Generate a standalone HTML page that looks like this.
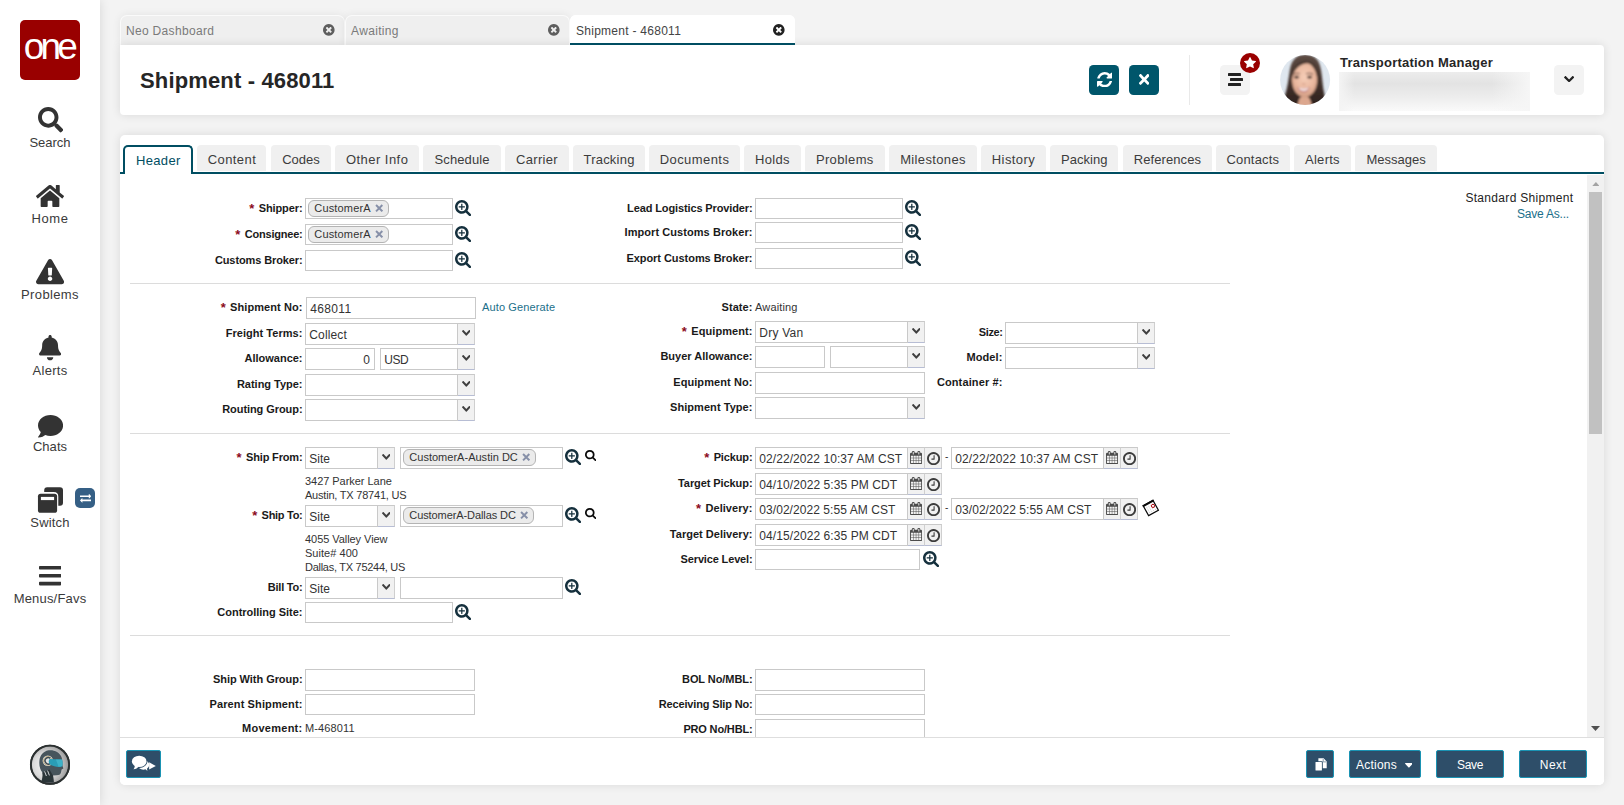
<!DOCTYPE html>
<html lang="en"><head><meta charset="utf-8"><title>Shipment - 468011</title><style>
html,body{margin:0;padding:0}
body{width:1624px;height:805px;overflow:hidden;position:relative;background:#f3f3f3;font-family:"Liberation Sans",sans-serif}
.a{position:absolute;box-sizing:content-box;display:block}
.t{position:absolute;line-height:20px;white-space:pre}
</style></head>
<body>
<div class="a" style="left:0px;top:0px;width:100px;height:805px;background:#fff;box-shadow:0 0 10px rgba(20,0,0,.12);"></div>
<div class="a" style="left:20px;top:20px;width:60px;height:60px;background:#990000;border-radius:5px;"></div>
<span class="t " style="top:37.18px;font-size:37px;letter-spacing:-3.912px;color:#fff;left:23.80px;">one</span>
<svg class="a" style="left:37.9px;top:107.35px" width="25.2" height="25.4" viewBox="0.0 0.0 512.0 512.1" preserveAspectRatio="none"><path d="M505 442.7L405.300 343c-4.500-4.500-10.600-7-17-7H372c27.600-35.300 44-79.700 44-128C416 93.100 322.900 0 208 0S0 93.100 0 208s93.100 208 208 208c48.300 0 92.700-16.400 128-44v16.300c0 6.400 2.500 12.500 7 17l99.700 99.700c9.400 9.400 24.600 9.400 33.900 0l28.300-28.300c9.400-9.400 9.400-24.600.1-34zM208 336c-70.700 0-128-57.200-128-128 0-70.700 57.200-128 128-128 70.700 0 128 57.200 128 128 0 70.700-57.200 128-128 128z" fill="#333"/></svg>
<span class="t " style="top:132.50px;font-size:13px;letter-spacing:-0.010px;color:#3a3a3a;left:29.43px;">Search</span>
<svg class="a" style="left:36px;top:184.9px" width="28" height="22" viewBox="-0.0 32.0 576.0 448.0" preserveAspectRatio="none"><path d="M280.370 148.260L96 300.110V464a16 16 0 0 0 16 16l112.060-.29a16 16 0 0 0 15.920-16V368a16 16 0 0 1 16-16h64a16 16 0 0 1 16 16v95.640a16 16 0 0 0 16 16.050L464 480a16 16 0 0 0 16-16V300L295.670 148.260a12.190 12.190 0 0 0-15.300 0zM571.600 251.470L488 182.560V44.050a12 12 0 0 0-12-12h-56a12 12 0 0 0-12 12v72.610L318.470 43a48 48 0 0 0-61 0L4.340 251.470a12 12 0 0 0-1.600 16.900l25.500 31A12 12 0 0 0 45.150 301l235.220-193.740a12.190 12.190 0 0 1 15.300 0L530.900 301a12 12 0 0 0 16.900-1.600l25.500-31a12 12 0 0 0-1.700-16.930z" fill="#333"/></svg>
<span class="t " style="top:208.50px;font-size:13px;letter-spacing:0.538px;color:#3a3a3a;left:31.59px;">Home</span>
<svg class="a" style="left:36px;top:259.35px" width="28.1" height="25.2" viewBox="-0.0 -0.0 576.0 512.0" preserveAspectRatio="none"><path d="M569.517 440.013C587.975 472.007 564.806 512 527.940 512H48.054c-36.937 0-59.999-40.055-41.577-71.987L246.423 23.985c18.467-32.009 64.720-31.951 83.154 0l239.940 416.028zM288 354c-25.405 0-46 20.595-46 46s20.595 46 46 46 46-20.595 46-46-20.595-46-46-46zm-43.673-165.346l7.418 136c.347 6.364 5.609 11.346 11.982 11.346h48.546c6.373 0 11.635-4.982 11.982-11.346l7.418-136c.375-6.874-5.098-12.654-11.982-12.654h-63.383c-6.884 0-12.356 5.780-11.981 12.654z" fill="#333"/></svg>
<span class="t " style="top:284.50px;font-size:13px;letter-spacing:0.365px;color:#3a3a3a;left:21.09px;">Problems</span>
<svg class="a" style="left:38.9px;top:335.45px" width="22.2" height="25.3" viewBox="-0.0 0.0 448.0 512.0" preserveAspectRatio="none"><path d="M224 512c35.320 0 63.970-28.650 63.970-64H160.030c0 35.350 28.650 64 63.970 64zm215.390-149.710c-19.320-20.760-55.470-51.990-55.470-154.290 0-77.700-54.480-139.900-127.940-155.160V32c0-17.670-14.320-32-31.980-32s-31.980 14.330-31.980 32v20.840C118.560 68.100 64.080 130.300 64.080 208c0 102.300-36.150 133.530-55.470 154.290-6 6.450-8.660 14.160-8.610 21.710.110 16.400 12.980 32 32.100 32h383.800c19.120 0 32-15.600 32.100-32 .050-7.550-2.610-15.270-8.610-21.710z" fill="#333"/></svg>
<span class="t " style="top:360.50px;font-size:13px;letter-spacing:0.279px;color:#3a3a3a;left:32.55px;">Alerts</span>
<svg class="a" style="left:37.9px;top:415.2px" width="25.1" height="22.6" viewBox="0.0 32.0 512.0 448.0" preserveAspectRatio="none"><path d="M256 32C114.600 32 0 125.100 0 240c0 49.600 21.400 95 57 130.700C44.500 421.100 2.700 466 2.200 466.500c-2.200 2.300-2.800 5.700-1.500 8.700S4.800 480 8 480c66.300 0 116-31.800 140.600-51.400 32.700 12.300 69 19.400 107.400 19.400 141.400 0 256-93.100 256-208S397.400 32 256 32z" fill="#333"/></svg>
<span class="t " style="top:436.50px;font-size:13px;letter-spacing:0.048px;color:#3a3a3a;left:32.90px;">Chats</span>
<svg class="a" style="left:37px;top:487px;" width="27" height="26" viewBox="37 487 27 26"><path d="M47.2 487.2 H60 Q63 487.2 63 490.2 V502.8 Q63 505.8 60 505.8 H58.3 V496.4 Q58.3 491.9 53.8 491.9 H44.2 V490.2 Q44.2 487.2 47.2 487.2Z" fill="#333"/><rect x="37.95" y="493.7" width="19.15" height="19.1" rx="2.6" fill="#333"/><rect x="40.9" y="496.9" width="13.2" height="3.2" fill="#fff"/></svg>
<div class="a" style="left:75px;top:488px;width:20px;height:20px;background:#355f85;border-radius:5px;"></div>
<svg class="a" style="left:79.9px;top:494.2px" width="11.2" height="8.7" viewBox="0.0 288.0 1792.0 1344.0" preserveAspectRatio="none"><path d="M1792 1184v192q0 13-9.500 22.500t-22.500 9.500h-1376v192q0 13-9.500 22.500t-22.500 9.500q-12 0-24-10l-319-320q-9-9-9-22 0-14 9-23l320-320q9-9 23-9 13 0 22.500 9.500t9.500 22.500v192h1376q13 0 22.500 9.500t9.500 22.500zm0-544q0 14-9 23l-320 320q-9 9-23 9-13 0-22.500-9.500t-9.500-22.500v-192h-1376q-13 0-22.500-9.500t-9.500-22.500v-192q0-13 9.500-22.500t22.500-9.500h1376v-192q0-14 9-23t23-9q12 0 24 10l319 319q9 9 9 23z" fill="#fff"/></svg>
<span class="t " style="top:512.50px;font-size:13px;letter-spacing:0.167px;color:#3a3a3a;left:30.35px;">Switch</span>
<svg class="a" style="left:38.9px;top:566.3px" width="22.2" height="19.4" viewBox="0.0 60.0 448.0 392.0" preserveAspectRatio="none"><path d="M16 132h416c8.837 0 16-7.163 16-16V76c0-8.837-7.163-16-16-16H16C7.163 60 0 67.163 0 76v40c0 8.837 7.163 16 16 16zm0 160h416c8.837 0 16-7.163 16-16v-40c0-8.837-7.163-16-16-16H16c-8.837 0-16 7.163-16 16v40c0 8.837 7.163 16 16 16zm0 160h416c8.837 0 16-7.163 16-16v-40c0-8.837-7.163-16-16-16H16c-8.837 0-16 7.163-16 16v40c0 8.837 7.163 16 16 16z" fill="#333"/></svg>
<span class="t " style="top:588.50px;font-size:13px;letter-spacing:0.184px;color:#3a3a3a;left:13.68px;">Menus/Favs</span>
<svg class="a" style="left:20px;top:735px" width="60" height="60" viewBox="0 0 60 60">
<defs><radialGradient id="rg" cx="38%" cy="52%" r="62%"><stop offset="0" stop-color="#f8f8f8"/><stop offset=".55" stop-color="#dadada"/><stop offset="1" stop-color="#9a9a9a"/></radialGradient>
<filter id="rb"><feGaussianBlur stdDeviation=".45"/></filter></defs>
<circle cx="30" cy="29.7" r="20" fill="#2b3030"/><circle cx="30" cy="29.7" r="18.1" fill="url(#rg)"/>
<g filter="url(#rb)">
<path d="M28.5 15.3 C34 14.6 39.5 17 41.5 22 C42.6 25 42.2 28 42.4 30.5 L43.4 33.6 L41.6 34.4 L41 37.4 C40.6 39.6 38.8 40 36.6 40.2 L33 40.6 L33.8 47.6 L21 47.6 C22.4 44 23.2 41 22.4 37.6 C20 34.6 19 31 19.4 26 C19.8 20.6 23 16.4 28.5 15.3 Z" fill="#46545c"/>
<path d="M22.4 37.6 L29.4 34.6 L33 40.6 L33.8 47.6 L21 47.6 C22.4 44 23.2 41 22.4 37.6Z" fill="#2c3439"/>
<path d="M24.6 36.4 L26.4 41 M27.6 35.6 L29.4 40.4" stroke="#cfd5d8" stroke-width="1"/>
<circle cx="27.8" cy="25.8" r="5.2" fill="#dfe3e4"/><circle cx="27.8" cy="25.8" r="4.4" fill="none" stroke="#b59a5c" stroke-width=".7"/>
<path d="M30.4 23.4 A3.2 3.2 0 1 0 30.4 28.2" fill="none" stroke="#3d494f" stroke-width="1.5"/>
<path d="M29.6 24 L42 24.4 C42.8 27 42.8 29.4 42.2 31.4 C38.4 32.8 34 31.6 29.6 29.2 C28.4 27.6 28.4 25.6 29.6 24Z" fill="#2a9db6"/>
<path d="M36 24.6 L42 24.6 C42.6 27 42.6 29.4 42.1 31 L38.6 31.8Z" fill="#43b7cc" opacity=".8"/>
</g>
<circle cx="30" cy="29.7" r="19.3" fill="none" stroke="#2b3030" stroke-width="1.5"/>
</svg>
<div class="a" style="left:120px;top:15px;width:223px;height:29px;background:#efefef;border:1px solid #fafafa;border-radius:7px 7px 0 0;border-bottom:none;box-shadow:0 0 8px rgba(0,0,0,.07);"></div>
<div class="a" style="left:345px;top:15px;width:223px;height:29px;background:#efefef;border:1px solid #fafafa;border-radius:7px 7px 0 0;border-bottom:none;box-shadow:0 0 8px rgba(0,0,0,.07);"></div>
<div class="a" style="left:570px;top:15px;width:225px;height:30px;background:#fff;border-radius:6px 6px 0 0;"></div>
<span class="t " style="top:20.84px;font-size:12px;letter-spacing:0.318px;color:#7a7a7a;left:126px;">Neo Dashboard</span>
<span class="t " style="top:20.84px;font-size:12px;letter-spacing:0.338px;color:#7a7a7a;left:351px;">Awaiting</span>
<svg class="a" style="left:323.2px;top:24.1px" width="11.6" height="11.8" viewBox="128.0 128.0 1536.0 1536.0" preserveAspectRatio="none"><path d="M1277 1122q0-26-19-45l-181-181 181-181q19-19 19-45 0-27-19-46l-90-90q-19-19-46-19-26 0-45 19l-181 181-181-181q-19-19-45-19-27 0-46 19l-90 90q-19 19-19 46 0 26 19 45l181 181-181 181q-19 19-19 45 0 27 19 46l90 90q19 19 46 19 26 0 45-19l181-181 181 181q19 19 45 19 27 0 46-19l90-90q19-19 19-46zm387-226q0 209-103 385.500t-279.500 279.500-385.500 103-385.500-103-279.500-279.500-103-385.500 103-385.500 279.500-279.500 385.500-103 385.500 103 279.500 279.500 103 385.500z" fill="#5e5e5e"/></svg>
<svg class="a" style="left:548.2px;top:24.1px" width="11.6" height="11.8" viewBox="128.0 128.0 1536.0 1536.0" preserveAspectRatio="none"><path d="M1277 1122q0-26-19-45l-181-181 181-181q19-19 19-45 0-27-19-46l-90-90q-19-19-46-19-26 0-45 19l-181 181-181-181q-19-19-45-19-27 0-46 19l-90 90q-19 19-19 46 0 26 19 45l181 181-181 181q-19 19-19 45 0 27 19 46l90 90q19 19 46 19 26 0 45-19l181-181 181 181q19 19 45 19 27 0 46-19l90-90q19-19 19-46zm387-226q0 209-103 385.500t-279.500 279.500-385.500 103-385.500-103-279.500-279.500-103-385.500 103-385.500 279.500-279.500 385.500-103 385.500 103 279.500 279.500 103 385.500z" fill="#5e5e5e"/></svg>
<div class="a" style="left:120px;top:45px;width:1484px;height:70px;background:#fff;border-radius:0 4px 4px 4px;box-shadow:0 0 10px rgba(0,0,0,.11);"></div>
<div class="a" style="left:570px;top:15px;width:225px;height:30px;background:#fff;border-radius:6px 6px 0 0;"></div>
<div class="a" style="left:570px;top:43px;width:225px;height:2px;background:#004e62;"></div>
<span class="t " style="top:20.84px;font-size:12px;letter-spacing:0.270px;color:#444;left:576px;">Shipment - 468011</span>
<svg class="a" style="left:773.2px;top:24.1px" width="11.6" height="11.8" viewBox="128.0 128.0 1536.0 1536.0" preserveAspectRatio="none"><path d="M1277 1122q0-26-19-45l-181-181 181-181q19-19 19-45 0-27-19-46l-90-90q-19-19-46-19-26 0-45 19l-181 181-181-181q-19-19-45-19-27 0-46 19l-90 90q-19 19-19 46 0 26 19 45l181 181-181 181q-19 19-19 45 0 27 19 46l90 90q19 19 46 19 26 0 45-19l181-181 181 181q19 19 45 19 27 0 46-19l90-90q19-19 19-46zm387-226q0 209-103 385.500t-279.500 279.500-385.500 103-385.500-103-279.500-279.500-103-385.500 103-385.500 279.500-279.500 385.500-103 385.500 103 279.500 279.500 103 385.500z" fill="#222"/></svg>
<span class="t " style="top:71.38px;font-size:22px;letter-spacing:0.148px;color:#262626;font-weight:bold;left:140px;">Shipment - 468011</span>
<div class="a" style="left:1089px;top:65px;width:30px;height:30px;background:#00566b;border-radius:4.5px;"></div>
<svg class="a" style="left:1096.8px;top:71.9px" width="15.3" height="15.4" viewBox="128.0 128.0 1536.0 1536.0" preserveAspectRatio="none"><path d="M1639 1056q0 5-1 7-64 268-268 434.500t-478 166.500q-146 0-282.500-55t-243.500-157l-129 129q-19 19-45 19t-45-19-19-45v-448q0-26 19-45t45-19h448q26 0 45 19t19 45-19 45l-137 137q71 66 161 102t187 36q134 0 250-65t186-179q11-17 53-117 8-23 30-23h192q13 0 22.500 9.500t9.500 22.500zm25-800v448q0 26-19 45t-45 19h-448q-26 0-45-19t-19-45 19-45l138-138q-148-137-349-137-134 0-250 65t-186 179q-11 17-53 117-8 23-30 23h-199q-13 0-22.500-9.500t-9.500-22.500v-7q65-268 270-434.500t480-166.500q146 0 284 55.500t245 156.500l130-129q19-19 45-19t45 19 19 45z" fill="#fff"/></svg>
<div class="a" style="left:1129px;top:65px;width:30px;height:30px;background:#00566b;border-radius:4.5px;"></div>
<svg class="a" style="left:1138.9px;top:74.1px" width="10.4" height="10.9" viewBox="0.0 80.0 352.0 352.0" preserveAspectRatio="none"><path d="M242.720 256l100.070-100.070c12.280-12.280 12.280-32.190 0-44.480l-22.240-22.240c-12.280-12.280-32.190-12.280-44.480 0L176 189.280 75.930 89.210c-12.280-12.280-32.190-12.280-44.480 0L9.210 111.450c-12.280 12.280-12.280 32.190 0 44.480L109.280 256 9.210 356.070c-12.280 12.280-12.280 32.190 0 44.480l22.240 22.240c12.280 12.280 32.200 12.280 44.480 0L176 322.720l100.070 100.070c12.280 12.280 32.200 12.280 44.480 0l22.240-22.240c12.280-12.280 12.280-32.190 0-44.480L242.720 256z" fill="#fff"/></svg>
<div class="a" style="left:1189px;top:55px;width:1px;height:50px;background:#e9e9e9;"></div>
<div class="a" style="left:1220px;top:65px;width:30px;height:30px;background:#f3f3f3;border-radius:4.5px;"></div>
<div class="a" style="left:1228px;top:73.1px;width:13.2px;height:2.7px;background:#222;border-radius:.6px;"></div>
<div class="a" style="left:1230px;top:78.2px;width:13.2px;height:2.7px;background:#222;border-radius:.6px;"></div>
<div class="a" style="left:1228px;top:83.2px;width:13.2px;height:2.7px;background:#222;border-radius:.6px;"></div>
<div class="a" style="left:1240px;top:53px;width:20px;height:20px;background:#990000;border-radius:50%;"></div>
<svg class="a" style="left:1244.1px;top:57.4px" width="12" height="11.2" viewBox="64.0 32.0 1664.0 1587.0" preserveAspectRatio="none"><path d="M1728 647q0 22-26 48l-363 354 86 500q1 7 1 20 0 21-10.500 35.500t-30.500 14.500q-19 0-40-12l-449-236-449 236q-22 12-40 12-21 0-31.500-14.500t-10.500-35.500q0-6 2-20l86-500-364-354q-25-27-25-48 0-37 56-46l502-73 225-455q19-41 49-41t49 41l225 455 502 73q56 9 56 46z" fill="#fff"/></svg>
<svg class="a" style="left:1275px;top:50px" width="60" height="60" viewBox="0 0 60 60">
<defs><clipPath id="av"><circle cx="30.1" cy="30" r="25"/></clipPath>
<radialGradient id="sk" cx="50%" cy="42%" r="62%"><stop offset="0" stop-color="#f6cdb7"/><stop offset=".65" stop-color="#e9b79e"/><stop offset="1" stop-color="#c8937a"/></radialGradient>
<linearGradient id="hr" x1="0" y1="0" x2="0" y2="1"><stop offset="0" stop-color="#5f4d45"/><stop offset=".35" stop-color="#4a3932"/><stop offset="1" stop-color="#2c1f1b"/></linearGradient>
<filter id="bl" x="-20%" y="-20%" width="140%" height="140%"><feGaussianBlur stdDeviation=".8"/></filter></defs>
<g clip-path="url(#av)"><rect width="60" height="60" fill="#dfe7ef"/>
<g filter="url(#bl)">
<path d="M31 4.5 C22 4 16.5 10 15 19 C13.5 29 12.5 38 9.5 47 C8.5 51 10 56 14 58 H47 C50 55 50.5 50 49.5 45 C47.5 36 47.5 28 46 20 C44.5 10 40 5 31 4.5Z" fill="url(#hr)"/>
<path d="M22.5 58 C23 50 24.5 46 29.5 46 C34.5 46 36 50 37 58Z" fill="#dca78e"/>
<ellipse cx="29.6" cy="29.9" rx="12.6" ry="17.3" fill="url(#sk)"/>
<path d="M16.6 30 C15.5 17 23 10.5 32.5 10.8 C40 11.2 43.5 19 42.4 30 C42 21.5 38.5 14.6 33 13.2 C26 13.4 18.6 18 16.6 30Z" fill="#4a3932"/>
<path d="M18.4 24.2 Q21.6 22.6 25 23.8 M31 23.8 Q34.6 22.6 38 24.2" fill="none" stroke="#6a4a40" stroke-width="1.1"/>
<ellipse cx="21.6" cy="27.2" rx="2.5" ry="1.4" fill="#43302c"/><ellipse cx="34.6" cy="27.2" rx="2.5" ry="1.4" fill="#43302c"/>
<path d="M27.2 33.6 Q28.6 35 30.4 33.8" fill="none" stroke="#c98f7a" stroke-width="1"/>
<path d="M22.2 37.2 Q28.6 39 35.2 37 Q33.4 42.6 28.8 42.6 Q24 42.6 22.2 37.2Z" fill="#c47f78"/>
<path d="M23.6 37.8 Q28.8 39.2 34 37.6 Q32.6 41 28.8 41 Q25 41 23.6 37.8Z" fill="#f6e6e6"/>
</g></g></svg>
<span class="t " style="top:53.00px;font-size:13px;letter-spacing:0.224px;color:#262626;font-weight:bold;left:1340px;">Transportation Manager</span>
<div class="a" style="left:1339px;top:72px;width:191px;height:39px;background:linear-gradient(180deg,#ececec 0%,#e3e3e3 30%,#ededed 65%,#fafafa 100%);"></div>
<div class="a" style="left:1339px;top:72px;width:191px;height:39px;background:linear-gradient(90deg,#f4f4f4 0%,rgba(244,244,244,0) 8%,rgba(244,244,244,0) 80%,#f6f6f6 100%);"></div>
<div class="a" style="left:1554px;top:65px;width:30px;height:30px;background:#f3f3f3;border-radius:4.5px;"></div>
<svg class="a" style="left:1563.9px;top:75.8px" width="10.2" height="6.4" viewBox="90.0 533.0 1612.0 1035.0" preserveAspectRatio="none"><path d="M1683 808l-742 741q-19 19-45 19t-45-19l-742-741q-19-19-19-45.500t19-45.500l166-165q19-19 45-19t45 19l531 531 531-531q19-19 45-19t45 19l166 165q19 19 19 45.500t-19 45.500z" fill="#222"/></svg>
<div class="a" style="left:120px;top:135px;width:1484px;height:650px;background:#fff;border-radius:5px;box-shadow:0 0 10px rgba(0,0,0,.11);"></div>
<div class="a" style="left:120px;top:172px;width:1484px;height:2px;background:#004e62;"></div>
<div class="a" style="left:123px;top:145px;width:66px;height:27px;background:#fff;border:2px solid #004e62;border-radius:5px 5px 0 0;border-bottom:none;"></div>
<span class="t " style="top:150.70px;font-size:13px;letter-spacing:0.340px;color:#004e62;left:135.96px;">Header</span>
<div class="a" style="left:197px;top:145px;width:69px;height:26px;background:#f0f0f0;border-radius:4px 4px 0 0;"></div>
<span class="t " style="top:149.70px;font-size:13px;letter-spacing:0.422px;color:#3c3c3c;left:207.71px;">Content</span>
<div class="a" style="left:271px;top:145px;width:60px;height:26px;background:#f0f0f0;border-radius:4px 4px 0 0;"></div>
<span class="t " style="top:149.70px;font-size:13px;letter-spacing:-0.013px;color:#3c3c3c;left:282.24px;">Codes</span>
<div class="a" style="left:335px;top:145px;width:84px;height:26px;background:#f0f0f0;border-radius:4px 4px 0 0;"></div>
<span class="t " style="top:149.70px;font-size:13px;letter-spacing:0.472px;color:#3c3c3c;left:345.88px;">Other Info</span>
<div class="a" style="left:423px;top:145px;width:78px;height:26px;background:#f0f0f0;border-radius:4px 4px 0 0;"></div>
<span class="t " style="top:149.70px;font-size:13px;letter-spacing:0.114px;color:#3c3c3c;left:434.49px;">Schedule</span>
<div class="a" style="left:505px;top:145px;width:64px;height:26px;background:#f0f0f0;border-radius:4px 4px 0 0;"></div>
<span class="t " style="top:149.70px;font-size:13px;letter-spacing:0.315px;color:#3c3c3c;left:516.08px;">Carrier</span>
<div class="a" style="left:573px;top:145px;width:72px;height:26px;background:#f0f0f0;border-radius:4px 4px 0 0;"></div>
<span class="t " style="top:149.70px;font-size:13px;letter-spacing:0.220px;color:#3c3c3c;left:583.48px;">Tracking</span>
<div class="a" style="left:649px;top:145px;width:91px;height:26px;background:#f0f0f0;border-radius:4px 4px 0 0;"></div>
<span class="t " style="top:149.70px;font-size:13px;letter-spacing:0.434px;color:#3c3c3c;left:659.67px;">Documents</span>
<div class="a" style="left:744px;top:145px;width:57px;height:26px;background:#f0f0f0;border-radius:4px 4px 0 0;"></div>
<span class="t " style="top:149.70px;font-size:13px;letter-spacing:0.332px;color:#3c3c3c;left:754.95px;">Holds</span>
<div class="a" style="left:805px;top:145px;width:80px;height:26px;background:#f0f0f0;border-radius:4px 4px 0 0;"></div>
<span class="t " style="top:149.70px;font-size:13px;letter-spacing:0.365px;color:#3c3c3c;left:815.89px;">Problems</span>
<div class="a" style="left:889px;top:145px;width:88px;height:26px;background:#f0f0f0;border-radius:4px 4px 0 0;"></div>
<span class="t " style="top:149.70px;font-size:13px;letter-spacing:0.358px;color:#3c3c3c;left:900.14px;">Milestones</span>
<div class="a" style="left:981px;top:145px;width:65px;height:26px;background:#f0f0f0;border-radius:4px 4px 0 0;"></div>
<span class="t " style="top:149.70px;font-size:13px;letter-spacing:0.419px;color:#3c3c3c;left:991.81px;">History</span>
<div class="a" style="left:1050px;top:145px;width:68px;height:26px;background:#f0f0f0;border-radius:4px 4px 0 0;"></div>
<span class="t " style="top:149.70px;font-size:13px;letter-spacing:0.030px;color:#3c3c3c;left:1061.02px;">Packing</span>
<div class="a" style="left:1123px;top:145px;width:89px;height:26px;background:#f0f0f0;border-radius:4px 4px 0 0;"></div>
<span class="t " style="top:149.70px;font-size:13px;letter-spacing:0.081px;color:#3c3c3c;left:1133.75px;">References</span>
<div class="a" style="left:1216px;top:145px;width:74px;height:26px;background:#f0f0f0;border-radius:4px 4px 0 0;"></div>
<span class="t " style="top:149.70px;font-size:13px;letter-spacing:0.191px;color:#3c3c3c;left:1226.43px;">Contacts</span>
<div class="a" style="left:1294px;top:145px;width:57px;height:26px;background:#f0f0f0;border-radius:4px 4px 0 0;"></div>
<span class="t " style="top:149.70px;font-size:13px;letter-spacing:0.279px;color:#3c3c3c;left:1305.00px;">Alerts</span>
<div class="a" style="left:1355px;top:145px;width:82px;height:26px;background:#f0f0f0;border-radius:4px 4px 0 0;"></div>
<span class="t " style="top:149.70px;font-size:13px;letter-spacing:0.004px;color:#3c3c3c;left:1366.46px;">Messages</span>
<div class="a" style="left:1587px;top:175px;width:17px;height:562px;background:#f1f1f1;"></div>
<div class="a" style="left:1589px;top:192px;width:13px;height:241.5px;background:#c1c1c1;"></div>
<svg class="a" style="left:1591.6px;top:181.6px;" width="7.8" height="4.4" viewBox="0 0 9 5"><path d="M0 5 L4.5 0 L9 5Z" fill="#a3a3a3"/></svg>
<svg class="a" style="left:1591px;top:726px;" width="9" height="5" viewBox="0 0 9 5"><path d="M0 0 L4.5 5 L9 0Z" fill="#505050"/></svg>
<span class="t " style="top:187.84px;font-size:12px;letter-spacing:0.315px;color:#222;left:1465.41px;">Standard Shipment</span>
<span class="t " style="top:203.84px;font-size:12px;letter-spacing:-0.199px;color:#1b6f8a;left:1516.96px;">Save As...</span>
<div class="a" style="left:130px;top:283px;width:1100px;height:1px;background:#dcdcdc;"></div>
<div class="a" style="left:130px;top:433px;width:1100px;height:1px;background:#dcdcdc;"></div>
<div class="a" style="left:130px;top:635px;width:1100px;height:1px;background:#dcdcdc;"></div>
<span class="t " style="top:198.19px;font-size:11px;letter-spacing:-0.099px;color:#1a1a1a;font-weight:bold;left:258.68px;">Shipper:</span>
<span class="t " style="top:198.80px;font-size:13px;letter-spacing:1.813px;color:#8c0a1c;font-weight:bold;left:249.21px;">*</span>
<div class="a" style="left:305px;top:198px;width:146px;height:19px;background:#fff;border:1px solid #c9c9c9;"></div>
<div class="a" style="left:308px;top:200px;width:79px;height:15px;background:#ebebeb;border:1px solid #b4b4b4;border-radius:6px;"></div>
<span class="t " style="top:198.09px;font-size:11px;letter-spacing:0.165px;color:#333;left:314.3px;">CustomerA</span>
<svg class="a" style="left:374.8px;top:204.4px;" width="8.4" height="8.4" viewBox="0 0 8 8"><path d="M1 1 L7 7 M7 1 L1 7" stroke="#8790a8" stroke-width="1.9"/></svg>
<svg class="a" style="left:455.1px;top:199.9px" width="16.1" height="16.2" viewBox="64.0 128.0 1664.0 1664.0" preserveAspectRatio="none"><path d="M1088 800v64q0 13-9.500 22.500t-22.500 9.500h-224v224q0 13-9.500 22.500t-22.500 9.500h-64q-13 0-22.500-9.500t-9.500-22.500v-224h-224q-13 0-22.500-9.500t-9.500-22.500v-64q0-13 9.500-22.500t22.500-9.500h224v-224q0-13 9.500-22.500t22.500-9.500h64q13 0 22.500 9.500t9.500 22.500v224h224q13 0 22.500 9.500t9.500 22.500zm128 32q0-185-131.500-316.500t-316.500-131.500-316.500 131.500-131.500 316.500 131.500 316.500 316.500 131.500 316.500-131.500 131.500-316.500zm512 832q0 53-37.500 90.500t-90.500 37.500q-54 0-90-38l-343-342q-179 124-399 124-143 0-273.500-55.500t-225-150-150-225-55.500-273.500 55.500-273.500 150-225 225-150 273.500-55.500 273.500 55.500 225 150 150 225 55.500 273.500q0 220-124 399l343 343q37 37 37 90z" fill="#15303d"/></svg>
<span class="t " style="top:224.19px;font-size:11px;letter-spacing:-0.223px;color:#1a1a1a;font-weight:bold;left:244.83px;">Consignee:</span>
<span class="t " style="top:224.80px;font-size:13px;letter-spacing:1.813px;color:#8c0a1c;font-weight:bold;left:235.36px;">*</span>
<div class="a" style="left:305px;top:224px;width:146px;height:19px;background:#fff;border:1px solid #c9c9c9;"></div>
<div class="a" style="left:308px;top:226px;width:79px;height:15px;background:#ebebeb;border:1px solid #b4b4b4;border-radius:6px;"></div>
<span class="t " style="top:224.09px;font-size:11px;letter-spacing:0.165px;color:#333;left:314.3px;">CustomerA</span>
<svg class="a" style="left:374.8px;top:230.4px;" width="8.4" height="8.4" viewBox="0 0 8 8"><path d="M1 1 L7 7 M7 1 L1 7" stroke="#8790a8" stroke-width="1.9"/></svg>
<svg class="a" style="left:455.1px;top:225.9px" width="16.1" height="16.2" viewBox="64.0 128.0 1664.0 1664.0" preserveAspectRatio="none"><path d="M1088 800v64q0 13-9.500 22.500t-22.500 9.500h-224v224q0 13-9.500 22.500t-22.500 9.500h-64q-13 0-22.500-9.500t-9.500-22.500v-224h-224q-13 0-22.500-9.500t-9.500-22.500v-64q0-13 9.500-22.500t22.500-9.500h224v-224q0-13 9.500-22.500t22.500-9.500h64q13 0 22.500 9.500t9.500 22.500v224h224q13 0 22.500 9.500t9.500 22.500zm128 32q0-185-131.500-316.500t-316.500-131.500-316.500 131.500-131.500 316.500 131.500 316.500 316.500 131.500 316.500-131.500 131.500-316.500zm512 832q0 53-37.500 90.500t-90.500 37.500q-54 0-90-38l-343-342q-179 124-399 124-143 0-273.500-55.500t-225-150-150-225-55.500-273.500 55.500-273.500 150-225 225-150 273.500-55.500 273.500 55.500 225 150 150 225 55.500 273.500q0 220-124 399l343 343q37 37 37 90z" fill="#15303d"/></svg>
<span class="t " style="top:250.19px;font-size:11px;letter-spacing:-0.113px;color:#1a1a1a;font-weight:bold;left:214.95px;">Customs Broker:</span>
<div class="a" style="left:305px;top:250px;width:146px;height:19px;background:#fff;border:1px solid #c9c9c9;"></div>
<svg class="a" style="left:455.1px;top:251.9px" width="16.1" height="16.2" viewBox="64.0 128.0 1664.0 1664.0" preserveAspectRatio="none"><path d="M1088 800v64q0 13-9.500 22.500t-22.500 9.500h-224v224q0 13-9.500 22.500t-22.500 9.500h-64q-13 0-22.500-9.500t-9.500-22.500v-224h-224q-13 0-22.500-9.500t-9.500-22.500v-64q0-13 9.500-22.500t22.500-9.500h224v-224q0-13 9.500-22.500t22.500-9.500h64q13 0 22.500 9.500t9.500 22.500v224h224q13 0 22.500 9.500t9.500 22.500zm128 32q0-185-131.500-316.500t-316.500-131.500-316.500 131.500-131.500 316.500 131.500 316.500 316.500 131.500 316.500-131.500 131.500-316.500zm512 832q0 53-37.500 90.500t-90.500 37.500q-54 0-90-38l-343-342q-179 124-399 124-143 0-273.500-55.500t-225-150-150-225-55.500-273.500 55.500-273.500 150-225 225-150 273.500-55.500 273.500 55.500 225 150 150 225 55.500 273.500q0 220-124 399l343 343q37 37 37 90z" fill="#15303d"/></svg>
<span class="t " style="top:198.19px;font-size:11px;letter-spacing:-0.124px;color:#1a1a1a;font-weight:bold;left:627.11px;">Lead Logistics Provider:</span>
<div class="a" style="left:755px;top:198px;width:146px;height:19px;background:#fff;border:1px solid #c9c9c9;"></div>
<svg class="a" style="left:905.1px;top:199.9px" width="16.1" height="16.2" viewBox="64.0 128.0 1664.0 1664.0" preserveAspectRatio="none"><path d="M1088 800v64q0 13-9.500 22.500t-22.500 9.500h-224v224q0 13-9.500 22.500t-22.500 9.500h-64q-13 0-22.500-9.500t-9.500-22.500v-224h-224q-13 0-22.500-9.500t-9.500-22.500v-64q0-13 9.500-22.500t22.500-9.500h224v-224q0-13 9.500-22.500t22.500-9.500h64q13 0 22.500 9.500t9.500 22.500v224h224q13 0 22.500 9.500t9.500 22.500zm128 32q0-185-131.500-316.500t-316.500-131.500-316.500 131.500-131.500 316.500 131.500 316.500 316.500 131.500 316.500-131.500 131.500-316.500zm512 832q0 53-37.500 90.500t-90.500 37.500q-54 0-90-38l-343-342q-179 124-399 124-143 0-273.500-55.500t-225-150-150-225-55.500-273.500 55.500-273.500 150-225 225-150 273.500-55.500 273.500 55.500 225 150 150 225 55.500 273.500q0 220-124 399l343 343q37 37 37 90z" fill="#15303d"/></svg>
<span class="t " style="top:222.19px;font-size:11px;letter-spacing:0.066px;color:#1a1a1a;font-weight:bold;left:624.54px;">Import Customs Broker:</span>
<div class="a" style="left:755px;top:222px;width:146px;height:19px;background:#fff;border:1px solid #c9c9c9;"></div>
<svg class="a" style="left:905.1px;top:223.9px" width="16.1" height="16.2" viewBox="64.0 128.0 1664.0 1664.0" preserveAspectRatio="none"><path d="M1088 800v64q0 13-9.500 22.500t-22.500 9.500h-224v224q0 13-9.500 22.500t-22.500 9.500h-64q-13 0-22.500-9.500t-9.500-22.500v-224h-224q-13 0-22.500-9.500t-9.500-22.500v-64q0-13 9.500-22.500t22.500-9.500h224v-224q0-13 9.500-22.500t22.500-9.500h64q13 0 22.500 9.500t9.500 22.500v224h224q13 0 22.500 9.500t9.500 22.500zm128 32q0-185-131.500-316.500t-316.500-131.500-316.500 131.500-131.500 316.500 131.500 316.500 316.500 131.500 316.500-131.500 131.500-316.500zm512 832q0 53-37.500 90.500t-90.500 37.500q-54 0-90-38l-343-342q-179 124-399 124-143 0-273.500-55.500t-225-150-150-225-55.500-273.500 55.500-273.500 150-225 225-150 273.500-55.500 273.500 55.500 225 150 150 225 55.500 273.500q0 220-124 399l343 343q37 37 37 90z" fill="#15303d"/></svg>
<span class="t " style="top:248.19px;font-size:11px;letter-spacing:-0.047px;color:#1a1a1a;font-weight:bold;left:626.40px;">Export Customs Broker:</span>
<div class="a" style="left:755px;top:248px;width:146px;height:19px;background:#fff;border:1px solid #c9c9c9;"></div>
<svg class="a" style="left:905.1px;top:249.9px" width="16.1" height="16.2" viewBox="64.0 128.0 1664.0 1664.0" preserveAspectRatio="none"><path d="M1088 800v64q0 13-9.500 22.500t-22.500 9.500h-224v224q0 13-9.500 22.500t-22.500 9.500h-64q-13 0-22.500-9.500t-9.500-22.500v-224h-224q-13 0-22.500-9.500t-9.500-22.500v-64q0-13 9.500-22.500t22.500-9.500h224v-224q0-13 9.500-22.500t22.500-9.500h64q13 0 22.500 9.500t9.500 22.500v224h224q13 0 22.500 9.500t9.500 22.500zm128 32q0-185-131.500-316.500t-316.500-131.500-316.500 131.500-131.500 316.500 131.500 316.500 316.500 131.500 316.500-131.500 131.500-316.500zm512 832q0 53-37.500 90.500t-90.500 37.500q-54 0-90-38l-343-342q-179 124-399 124-143 0-273.500-55.500t-225-150-150-225-55.500-273.500 55.500-273.500 150-225 225-150 273.500-55.500 273.500 55.500 225 150 150 225 55.500 273.500q0 220-124 399l343 343q37 37 37 90z" fill="#15303d"/></svg>
<span class="t " style="top:297.49px;font-size:11px;letter-spacing:0.075px;color:#1a1a1a;font-weight:bold;left:230.10px;">Shipment No:</span>
<span class="t " style="top:298.10px;font-size:13px;letter-spacing:1.813px;color:#8c0a1c;font-weight:bold;left:220.63px;">*</span>
<div class="a" style="left:306px;top:297px;width:168px;height:20px;background:#fff;border:1px solid #c9c9c9;"></div>
<span class="t " style="top:298.54px;font-size:12px;letter-spacing:0.336px;color:#333;left:310.3px;">468011</span>
<span class="t " style="top:297.19px;font-size:11px;letter-spacing:0.127px;color:#1b6f8a;left:482px;">Auto Generate</span>
<span class="t " style="top:323.19px;font-size:11px;letter-spacing:0.047px;color:#1a1a1a;font-weight:bold;left:225.64px;">Freight Terms:</span>
<div class="a" style="left:305px;top:323px;width:151px;height:20px;background:#fff;border:1px solid #c9c9c9;"></div>
<span class="t " style="top:324.54px;font-size:12px;letter-spacing:0.127px;color:#333;left:309.3px;">Collect</span>
<div class="a" style="left:458px;top:323px;width:16px;height:20px;background:#f1f1f1;border-top:1px solid #c9c9c9;border-right:1px solid #cfcfcf;border-bottom:1px solid #b7bdd4;"></div>
<svg class="a" style="left:461.6px;top:330.4px" width="8.6" height="5.8" viewBox="90.0 533.0 1612.0 1035.0" preserveAspectRatio="none"><path d="M1683 808l-742 741q-19 19-45 19t-45-19l-742-741q-19-19-19-45.500t19-45.500l166-165q19-19 45-19t45 19l531 531 531-531q19-19 45-19t45 19l166 165q19 19 19 45.500t-19 45.500z" fill="#404040"/></svg>
<span class="t " style="top:348.19px;font-size:11px;letter-spacing:-0.017px;color:#1a1a1a;font-weight:bold;left:244.61px;">Allowance:</span>
<div class="a" style="left:305px;top:348px;width:68px;height:20px;background:#fff;border:1px solid #c9c9c9;"></div>
<span class="t " style="top:349.84px;font-size:12px;letter-spacing:0.187px;color:#333;left:363.14px;">0</span>
<div class="a" style="left:380px;top:348px;width:76px;height:20px;background:#fff;border:1px solid #c9c9c9;"></div>
<span class="t " style="top:349.54px;font-size:12px;letter-spacing:-0.422px;color:#333;left:384.3px;">USD</span>
<div class="a" style="left:458px;top:348px;width:16px;height:20px;background:#f1f1f1;border-top:1px solid #c9c9c9;border-right:1px solid #cfcfcf;border-bottom:1px solid #b7bdd4;"></div>
<svg class="a" style="left:461.6px;top:355.4px" width="8.6" height="5.8" viewBox="90.0 533.0 1612.0 1035.0" preserveAspectRatio="none"><path d="M1683 808l-742 741q-19 19-45 19t-45-19l-742-741q-19-19-19-45.500t19-45.500l166-165q19-19 45-19t45 19l531 531 531-531q19-19 45-19t45 19l166 165q19 19 19 45.500t-19 45.500z" fill="#404040"/></svg>
<span class="t " style="top:374.19px;font-size:11px;letter-spacing:-0.022px;color:#1a1a1a;font-weight:bold;left:236.96px;">Rating Type:</span>
<div class="a" style="left:305px;top:374px;width:151px;height:20px;background:#fff;border:1px solid #c9c9c9;"></div>
<div class="a" style="left:458px;top:374px;width:16px;height:20px;background:#f1f1f1;border-top:1px solid #c9c9c9;border-right:1px solid #cfcfcf;border-bottom:1px solid #b7bdd4;"></div>
<svg class="a" style="left:461.6px;top:381.4px" width="8.6" height="5.8" viewBox="90.0 533.0 1612.0 1035.0" preserveAspectRatio="none"><path d="M1683 808l-742 741q-19 19-45 19t-45-19l-742-741q-19-19-19-45.500t19-45.500l166-165q19-19 45-19t45 19l531 531 531-531q19-19 45-19t45 19l166 165q19 19 19 45.500t-19 45.500z" fill="#404040"/></svg>
<span class="t " style="top:399.19px;font-size:11px;letter-spacing:-0.069px;color:#1a1a1a;font-weight:bold;left:222.21px;">Routing Group:</span>
<div class="a" style="left:305px;top:399px;width:151px;height:20px;background:#fff;border:1px solid #c9c9c9;"></div>
<div class="a" style="left:458px;top:399px;width:16px;height:20px;background:#f1f1f1;border-top:1px solid #c9c9c9;border-right:1px solid #cfcfcf;border-bottom:1px solid #b7bdd4;"></div>
<svg class="a" style="left:461.6px;top:406.4px" width="8.6" height="5.8" viewBox="90.0 533.0 1612.0 1035.0" preserveAspectRatio="none"><path d="M1683 808l-742 741q-19 19-45 19t-45-19l-742-741q-19-19-19-45.500t19-45.500l166-165q19-19 45-19t45 19l531 531 531-531q19-19 45-19t45 19l166 165q19 19 19 45.500t-19 45.500z" fill="#404040"/></svg>
<span class="t " style="top:297.19px;font-size:11px;letter-spacing:0.058px;color:#1a1a1a;font-weight:bold;left:721.59px;">State:</span>
<span class="t " style="top:297.19px;font-size:11px;letter-spacing:0.156px;color:#333;left:755px;">Awaiting</span>
<span class="t " style="top:321.49px;font-size:11px;letter-spacing:0.072px;color:#1a1a1a;font-weight:bold;left:691.28px;">Equipment:</span>
<span class="t " style="top:322.10px;font-size:13px;letter-spacing:1.813px;color:#8c0a1c;font-weight:bold;left:681.81px;">*</span>
<div class="a" style="left:755px;top:321px;width:151px;height:20px;background:#fff;border:1px solid #c9c9c9;"></div>
<span class="t " style="top:322.54px;font-size:12px;letter-spacing:0.219px;color:#333;left:759.3px;">Dry Van</span>
<div class="a" style="left:908px;top:321px;width:16px;height:20px;background:#f1f1f1;border-top:1px solid #c9c9c9;border-right:1px solid #cfcfcf;border-bottom:1px solid #b7bdd4;"></div>
<svg class="a" style="left:911.6px;top:328.4px" width="8.6" height="5.8" viewBox="90.0 533.0 1612.0 1035.0" preserveAspectRatio="none"><path d="M1683 808l-742 741q-19 19-45 19t-45-19l-742-741q-19-19-19-45.500t19-45.500l166-165q19-19 45-19t45 19l531 531 531-531q19-19 45-19t45 19l166 165q19 19 19 45.500t-19 45.500z" fill="#404040"/></svg>
<span class="t " style="top:346.19px;font-size:11px;letter-spacing:0.011px;color:#1a1a1a;font-weight:bold;left:660.42px;">Buyer Allowance:</span>
<div class="a" style="left:755px;top:346px;width:68px;height:20px;background:#fff;border:1px solid #c9c9c9;"></div>
<div class="a" style="left:830px;top:346px;width:76px;height:20px;background:#fff;border:1px solid #c9c9c9;"></div>
<div class="a" style="left:908px;top:346px;width:16px;height:20px;background:#f1f1f1;border-top:1px solid #c9c9c9;border-right:1px solid #cfcfcf;border-bottom:1px solid #b7bdd4;"></div>
<svg class="a" style="left:911.6px;top:353.4px" width="8.6" height="5.8" viewBox="90.0 533.0 1612.0 1035.0" preserveAspectRatio="none"><path d="M1683 808l-742 741q-19 19-45 19t-45-19l-742-741q-19-19-19-45.500t19-45.500l166-165q19-19 45-19t45 19l531 531 531-531q19-19 45-19t45 19l166 165q19 19 19 45.500t-19 45.500z" fill="#404040"/></svg>
<span class="t " style="top:372.19px;font-size:11px;letter-spacing:0.081px;color:#1a1a1a;font-weight:bold;left:673.23px;">Equipment No:</span>
<div class="a" style="left:755px;top:372px;width:168px;height:20px;background:#fff;border:1px solid #c9c9c9;"></div>
<span class="t " style="top:397.19px;font-size:11px;letter-spacing:0.052px;color:#1a1a1a;font-weight:bold;left:670.08px;">Shipment Type:</span>
<div class="a" style="left:755px;top:397px;width:151px;height:20px;background:#fff;border:1px solid #c9c9c9;"></div>
<div class="a" style="left:908px;top:397px;width:16px;height:20px;background:#f1f1f1;border-top:1px solid #c9c9c9;border-right:1px solid #cfcfcf;border-bottom:1px solid #b7bdd4;"></div>
<svg class="a" style="left:911.6px;top:404.4px" width="8.6" height="5.8" viewBox="90.0 533.0 1612.0 1035.0" preserveAspectRatio="none"><path d="M1683 808l-742 741q-19 19-45 19t-45-19l-742-741q-19-19-19-45.500t19-45.500l166-165q19-19 45-19t45 19l531 531 531-531q19-19 45-19t45 19l166 165q19 19 19 45.500t-19 45.500z" fill="#404040"/></svg>
<span class="t " style="top:322.19px;font-size:11px;letter-spacing:-0.402px;color:#1a1a1a;font-weight:bold;left:978.84px;">Size:</span>
<div class="a" style="left:1005px;top:322px;width:131px;height:20px;background:#fff;border:1px solid #c9c9c9;"></div>
<div class="a" style="left:1138px;top:322px;width:16px;height:20px;background:#f1f1f1;border-top:1px solid #c9c9c9;border-right:1px solid #cfcfcf;border-bottom:1px solid #b7bdd4;"></div>
<svg class="a" style="left:1141.6px;top:329.4px" width="8.6" height="5.8" viewBox="90.0 533.0 1612.0 1035.0" preserveAspectRatio="none"><path d="M1683 808l-742 741q-19 19-45 19t-45-19l-742-741q-19-19-19-45.500t19-45.500l166-165q19-19 45-19t45 19l531 531 531-531q19-19 45-19t45 19l166 165q19 19 19 45.500t-19 45.500z" fill="#404040"/></svg>
<span class="t " style="top:347.19px;font-size:11px;letter-spacing:0.097px;color:#1a1a1a;font-weight:bold;left:966.48px;">Model:</span>
<div class="a" style="left:1005px;top:347px;width:131px;height:20px;background:#fff;border:1px solid #c9c9c9;"></div>
<div class="a" style="left:1138px;top:347px;width:16px;height:20px;background:#f1f1f1;border-top:1px solid #c9c9c9;border-right:1px solid #cfcfcf;border-bottom:1px solid #b7bdd4;"></div>
<svg class="a" style="left:1141.6px;top:354.4px" width="8.6" height="5.8" viewBox="90.0 533.0 1612.0 1035.0" preserveAspectRatio="none"><path d="M1683 808l-742 741q-19 19-45 19t-45-19l-742-741q-19-19-19-45.500t19-45.500l166-165q19-19 45-19t45 19l531 531 531-531q19-19 45-19t45 19l166 165q19 19 19 45.500t-19 45.500z" fill="#404040"/></svg>
<span class="t " style="top:372.19px;font-size:11px;letter-spacing:0.120px;color:#1a1a1a;font-weight:bold;left:936.88px;">Container #:</span>
<span class="t " style="top:447.19px;font-size:11px;letter-spacing:-0.158px;color:#1a1a1a;font-weight:bold;left:246.02px;">Ship From:</span>
<span class="t " style="top:447.80px;font-size:13px;letter-spacing:1.813px;color:#8c0a1c;font-weight:bold;left:236.55px;">*</span>
<div class="a" style="left:305px;top:447px;width:71px;height:20px;background:#fff;border:1px solid #c9c9c9;"></div>
<span class="t " style="top:448.54px;font-size:12px;letter-spacing:-0.022px;color:#333;left:309.3px;">Site</span>
<div class="a" style="left:378px;top:447px;width:16px;height:20px;background:#f1f1f1;border-top:1px solid #c9c9c9;border-right:1px solid #cfcfcf;border-bottom:1px solid #b7bdd4;"></div>
<svg class="a" style="left:381.6px;top:454.4px" width="8.6" height="5.8" viewBox="90.0 533.0 1612.0 1035.0" preserveAspectRatio="none"><path d="M1683 808l-742 741q-19 19-45 19t-45-19l-742-741q-19-19-19-45.500t19-45.500l166-165q19-19 45-19t45 19l531 531 531-531q19-19 45-19t45 19l166 165q19 19 19 45.500t-19 45.500z" fill="#404040"/></svg>
<div class="a" style="left:400px;top:447px;width:161px;height:20px;background:#fff;border:1px solid #c9c9c9;"></div>
<div class="a" style="left:403px;top:449px;width:131px;height:15px;background:#ebebeb;border:1px solid #b4b4b4;border-radius:6px;"></div>
<span class="t " style="top:447.09px;font-size:11px;letter-spacing:0.016px;color:#333;left:409.3px;">CustomerA-Austin DC</span>
<svg class="a" style="left:521.8px;top:453.4px;" width="8.4" height="8.4" viewBox="0 0 8 8"><path d="M1 1 L7 7 M7 1 L1 7" stroke="#8790a8" stroke-width="1.9"/></svg>
<svg class="a" style="left:565.1px;top:448.9px" width="16.1" height="16.2" viewBox="64.0 128.0 1664.0 1664.0" preserveAspectRatio="none"><path d="M1088 800v64q0 13-9.500 22.500t-22.500 9.500h-224v224q0 13-9.500 22.500t-22.500 9.500h-64q-13 0-22.500-9.500t-9.500-22.500v-224h-224q-13 0-22.500-9.500t-9.500-22.500v-64q0-13 9.500-22.500t22.500-9.500h224v-224q0-13 9.500-22.500t22.500-9.500h64q13 0 22.500 9.500t9.500 22.500v224h224q13 0 22.500 9.500t9.500 22.500zm128 32q0-185-131.500-316.500t-316.500-131.500-316.500 131.500-131.500 316.500 131.500 316.500 316.500 131.500 316.500-131.500 131.500-316.500zm512 832q0 53-37.500 90.500t-90.500 37.500q-54 0-90-38l-343-342q-179 124-399 124-143 0-273.500-55.500t-225-150-150-225-55.500-273.500 55.500-273.500 150-225 225-150 273.500-55.500 273.500 55.500 225 150 150 225 55.500 273.500q0 220-124 399l343 343q37 37 37 90z" fill="#15303d"/></svg>
<svg class="a" style="left:584.6px;top:450.2px" width="11.3" height="11" viewBox="64.0 128.0 1664.0 1664.0" preserveAspectRatio="none"><path d="M1216 832q0-185-131.500-316.500t-316.500-131.500-316.500 131.500-131.500 316.500 131.500 316.500 316.500 131.500 316.500-131.500 131.500-316.500zm512 832q0 52-38 90t-90 38q-54 0-90-38l-343-342q-179 124-399 124-143 0-273.500-55.500t-225-150-150-225-55.500-273.500 55.500-273.500 150-225 225-150 273.500-55.500 273.500 55.500 225 150 150 225 55.500 273.500q0 220-124 399l343 343q37 37 37 90z" fill="#0a0a0a"/></svg>
<span class="t " style="top:471.19px;font-size:11px;letter-spacing:-0.042px;color:#333;left:305px;">3427 Parker Lane</span>
<span class="t " style="top:485.19px;font-size:11px;letter-spacing:-0.212px;color:#333;left:305px;">Austin, TX 78741, US</span>
<span class="t " style="top:505.19px;font-size:11px;letter-spacing:-0.287px;color:#1a1a1a;font-weight:bold;left:261.62px;">Ship To:</span>
<span class="t " style="top:505.80px;font-size:13px;letter-spacing:1.813px;color:#8c0a1c;font-weight:bold;left:252.15px;">*</span>
<div class="a" style="left:305px;top:505px;width:71px;height:20px;background:#fff;border:1px solid #c9c9c9;"></div>
<span class="t " style="top:506.54px;font-size:12px;letter-spacing:-0.022px;color:#333;left:309.3px;">Site</span>
<div class="a" style="left:378px;top:505px;width:16px;height:20px;background:#f1f1f1;border-top:1px solid #c9c9c9;border-right:1px solid #cfcfcf;border-bottom:1px solid #b7bdd4;"></div>
<svg class="a" style="left:381.6px;top:512.4px" width="8.6" height="5.8" viewBox="90.0 533.0 1612.0 1035.0" preserveAspectRatio="none"><path d="M1683 808l-742 741q-19 19-45 19t-45-19l-742-741q-19-19-19-45.500t19-45.500l166-165q19-19 45-19t45 19l531 531 531-531q19-19 45-19t45 19l166 165q19 19 19 45.500t-19 45.500z" fill="#404040"/></svg>
<div class="a" style="left:400px;top:505px;width:161px;height:20px;background:#fff;border:1px solid #c9c9c9;"></div>
<div class="a" style="left:403px;top:507px;width:129px;height:15px;background:#ebebeb;border:1px solid #b4b4b4;border-radius:6px;"></div>
<span class="t " style="top:505.09px;font-size:11px;letter-spacing:-0.089px;color:#333;left:409.3px;">CustomerA-Dallas DC</span>
<svg class="a" style="left:519.8px;top:511.4px;" width="8.4" height="8.4" viewBox="0 0 8 8"><path d="M1 1 L7 7 M7 1 L1 7" stroke="#8790a8" stroke-width="1.9"/></svg>
<svg class="a" style="left:565.1px;top:506.9px" width="16.1" height="16.2" viewBox="64.0 128.0 1664.0 1664.0" preserveAspectRatio="none"><path d="M1088 800v64q0 13-9.500 22.500t-22.500 9.500h-224v224q0 13-9.500 22.500t-22.500 9.500h-64q-13 0-22.500-9.500t-9.500-22.500v-224h-224q-13 0-22.500-9.500t-9.500-22.500v-64q0-13 9.500-22.500t22.500-9.500h224v-224q0-13 9.500-22.500t22.500-9.500h64q13 0 22.500 9.500t9.500 22.500v224h224q13 0 22.500 9.500t9.500 22.500zm128 32q0-185-131.500-316.500t-316.500-131.500-316.500 131.500-131.500 316.500 131.500 316.500 316.500 131.500 316.500-131.500 131.500-316.500zm512 832q0 53-37.500 90.500t-90.500 37.500q-54 0-90-38l-343-342q-179 124-399 124-143 0-273.500-55.500t-225-150-150-225-55.500-273.500 55.500-273.500 150-225 225-150 273.500-55.500 273.500 55.500 225 150 150 225 55.500 273.500q0 220-124 399l343 343q37 37 37 90z" fill="#15303d"/></svg>
<svg class="a" style="left:584.6px;top:508.2px" width="11.3" height="11" viewBox="64.0 128.0 1664.0 1664.0" preserveAspectRatio="none"><path d="M1216 832q0-185-131.500-316.500t-316.500-131.500-316.500 131.500-131.500 316.500 131.500 316.500 316.500 131.500 316.500-131.500 131.500-316.500zm512 832q0 52-38 90t-90 38q-54 0-90-38l-343-342q-179 124-399 124-143 0-273.500-55.500t-225-150-150-225-55.500-273.500 55.500-273.500 150-225 225-150 273.500-55.500 273.500 55.500 225 150 150 225 55.500 273.500q0 220-124 399l343 343q37 37 37 90z" fill="#0a0a0a"/></svg>
<span class="t " style="top:529.19px;font-size:11px;letter-spacing:-0.055px;color:#333;left:305px;">4055 Valley View</span>
<span class="t " style="top:543.19px;font-size:11px;letter-spacing:0.033px;color:#333;left:305px;">Suite# 400</span>
<span class="t " style="top:557.19px;font-size:11px;letter-spacing:-0.275px;color:#333;left:305px;">Dallas, TX 75244, US</span>
<span class="t " style="top:577.19px;font-size:11px;letter-spacing:-0.213px;color:#1a1a1a;font-weight:bold;left:267.75px;">Bill To:</span>
<div class="a" style="left:305px;top:577px;width:71px;height:20px;background:#fff;border:1px solid #c9c9c9;"></div>
<span class="t " style="top:578.54px;font-size:12px;letter-spacing:-0.022px;color:#333;left:309.3px;">Site</span>
<div class="a" style="left:378px;top:577px;width:16px;height:20px;background:#f1f1f1;border-top:1px solid #c9c9c9;border-right:1px solid #cfcfcf;border-bottom:1px solid #b7bdd4;"></div>
<svg class="a" style="left:381.6px;top:584.4px" width="8.6" height="5.8" viewBox="90.0 533.0 1612.0 1035.0" preserveAspectRatio="none"><path d="M1683 808l-742 741q-19 19-45 19t-45-19l-742-741q-19-19-19-45.500t19-45.500l166-165q19-19 45-19t45 19l531 531 531-531q19-19 45-19t45 19l166 165q19 19 19 45.500t-19 45.500z" fill="#404040"/></svg>
<div class="a" style="left:400px;top:577px;width:161px;height:20px;background:#fff;border:1px solid #c9c9c9;"></div>
<svg class="a" style="left:565.1px;top:578.9px" width="16.1" height="16.2" viewBox="64.0 128.0 1664.0 1664.0" preserveAspectRatio="none"><path d="M1088 800v64q0 13-9.500 22.500t-22.500 9.500h-224v224q0 13-9.500 22.500t-22.500 9.500h-64q-13 0-22.500-9.500t-9.500-22.500v-224h-224q-13 0-22.500-9.500t-9.500-22.500v-64q0-13 9.500-22.500t22.500-9.500h224v-224q0-13 9.500-22.500t22.500-9.500h64q13 0 22.500 9.500t9.500 22.500v224h224q13 0 22.500 9.500t9.500 22.500zm128 32q0-185-131.500-316.500t-316.500-131.500-316.500 131.500-131.500 316.500 131.500 316.500 316.500 131.500 316.500-131.500 131.500-316.500zm512 832q0 53-37.500 90.500t-90.500 37.500q-54 0-90-38l-343-342q-179 124-399 124-143 0-273.500-55.500t-225-150-150-225-55.500-273.500 55.500-273.500 150-225 225-150 273.500-55.500 273.500 55.500 225 150 150 225 55.500 273.500q0 220-124 399l343 343q37 37 37 90z" fill="#15303d"/></svg>
<span class="t " style="top:602.19px;font-size:11px;letter-spacing:-0.022px;color:#1a1a1a;font-weight:bold;left:217.33px;">Controlling Site:</span>
<div class="a" style="left:305px;top:602px;width:146px;height:19px;background:#fff;border:1px solid #c9c9c9;"></div>
<svg class="a" style="left:455.1px;top:603.9px" width="16.1" height="16.2" viewBox="64.0 128.0 1664.0 1664.0" preserveAspectRatio="none"><path d="M1088 800v64q0 13-9.500 22.500t-22.500 9.500h-224v224q0 13-9.500 22.500t-22.500 9.500h-64q-13 0-22.500-9.500t-9.500-22.500v-224h-224q-13 0-22.500-9.500t-9.500-22.500v-64q0-13 9.500-22.500t22.500-9.500h224v-224q0-13 9.500-22.500t22.500-9.500h64q13 0 22.500 9.500t9.500 22.500v224h224q13 0 22.500 9.500t9.500 22.500zm128 32q0-185-131.500-316.500t-316.500-131.500-316.500 131.500-131.500 316.500 131.500 316.500 316.500 131.500 316.500-131.500 131.500-316.500zm512 832q0 53-37.500 90.500t-90.500 37.500q-54 0-90-38l-343-342q-179 124-399 124-143 0-273.500-55.500t-225-150-150-225-55.500-273.500 55.500-273.500 150-225 225-150 273.500-55.500 273.500 55.500 225 150 150 225 55.500 273.500q0 220-124 399l343 343q37 37 37 90z" fill="#15303d"/></svg>
<span class="t " style="top:447.19px;font-size:11px;letter-spacing:-0.124px;color:#1a1a1a;font-weight:bold;left:713.63px;">Pickup:</span>
<span class="t " style="top:447.80px;font-size:13px;letter-spacing:1.813px;color:#8c0a1c;font-weight:bold;left:704.16px;">*</span>
<div class="a" style="left:755px;top:447px;width:151px;height:20px;background:#fff;border:1px solid #c9c9c9;"></div>
<span class="t " style="top:448.54px;font-size:12px;letter-spacing:0.065px;color:#333;left:759.3px;">02/22/2022 10:37 AM CST</span>
<div class="a" style="left:908px;top:447px;width:16px;height:20px;background:#f1f1f1;border-top:1px solid #c9c9c9;border-right:1px solid #cfcfcf;border-bottom:1px solid #b7bdd4;"></div>
<svg class="a" style="left:910px;top:450.9px" width="12.1" height="13" viewBox="64.0 0.0 1664.0 1792.0" preserveAspectRatio="none"><path d="M192 1664h288v-288h-288v288zm352 0h320v-288h-320v288zm-352-352h288v-320h-288v320zm352 0h320v-320h-320v320zm-352-384h288v-288h-288v288zm736 736h320v-288h-320v288zm-384-736h320v-288h-320v288zm768 736h288v-288h-288v288zm-384-352h320v-320h-320v320zm-352-864v-288q0-13-9.500-22.500t-22.500-9.500h-64q-13 0-22.500 9.500t-9.500 22.500v288q0 13 9.500 22.500t22.500 9.500h64q13 0 22.500-9.500t9.500-22.500zm736 864h288v-320h-288v320zm-384-384h320v-288h-320v288zm384 0h288v-288h-288v288zm32-480v-288q0-13-9.500-22.500t-22.500-9.500h-64q-13 0-22.500 9.500t-9.500 22.500v288q0 13 9.500 22.500t22.500 9.500h64q13 0 22.500-9.500t9.500-22.500zm384-64v1280q0 52-38 90t-90 38h-1408q-52 0-90-38t-38-90v-1280q0-52 38-90t90-38h128v-96q0-66 47-113t113-47h64q66 0 113 47t47 113v96h384v-96q0-66 47-113t113-47h64q66 0 113 47t47 113v96h128q52 0 90 38t38 90z" fill="#4c4c4c"/></svg>
<div class="a" style="left:925px;top:447px;width:16px;height:20px;background:#f1f1f1;border-top:1px solid #c9c9c9;border-right:1px solid #cfcfcf;border-bottom:1px solid #b7bdd4;"></div>
<svg class="a" style="left:926.5px;top:451.8px" width="13.1" height="13.2" viewBox="128.0 128.0 1536.0 1536.0" preserveAspectRatio="none"><path d="M1024 544v448q0 14-9 23t-23 9h-320q-14 0-23-9t-9-23v-64q0-14 9-23t23-9h224v-352q0-14 9-23t23-9h64q14 0 23 9t9 23zm416 352q0-148-73-273t-198-198-273-73-273 73-198 198-73 273 73 273 198 198 273 73 273-73 198-198 73-273zm224 0q0 209-103 385.500t-279.500 279.500-385.500 103-385.500-103-279.500-279.500-103-385.500 103-385.500 279.500-279.500 385.500-103 385.500 103 279.500 279.500 103 385.500z" fill="#3c3c3c"/></svg>
<span class="t " style="top:447.04px;font-size:10px;letter-spacing:-0.203px;color:#333;left:945px;">-</span>
<div class="a" style="left:951px;top:447px;width:151px;height:20px;background:#fff;border:1px solid #c9c9c9;"></div>
<span class="t " style="top:448.54px;font-size:12px;letter-spacing:0.065px;color:#333;left:955.3px;">02/22/2022 10:37 AM CST</span>
<div class="a" style="left:1104px;top:447px;width:16px;height:20px;background:#f1f1f1;border-top:1px solid #c9c9c9;border-right:1px solid #cfcfcf;border-bottom:1px solid #b7bdd4;"></div>
<svg class="a" style="left:1106px;top:450.9px" width="12.1" height="13" viewBox="64.0 0.0 1664.0 1792.0" preserveAspectRatio="none"><path d="M192 1664h288v-288h-288v288zm352 0h320v-288h-320v288zm-352-352h288v-320h-288v320zm352 0h320v-320h-320v320zm-352-384h288v-288h-288v288zm736 736h320v-288h-320v288zm-384-736h320v-288h-320v288zm768 736h288v-288h-288v288zm-384-352h320v-320h-320v320zm-352-864v-288q0-13-9.500-22.500t-22.500-9.500h-64q-13 0-22.500 9.500t-9.500 22.500v288q0 13 9.500 22.500t22.500 9.500h64q13 0 22.500-9.500t9.500-22.500zm736 864h288v-320h-288v320zm-384-384h320v-288h-320v288zm384 0h288v-288h-288v288zm32-480v-288q0-13-9.500-22.500t-22.500-9.500h-64q-13 0-22.500 9.500t-9.500 22.500v288q0 13 9.500 22.500t22.500 9.500h64q13 0 22.500-9.500t9.500-22.500zm384-64v1280q0 52-38 90t-90 38h-1408q-52 0-90-38t-38-90v-1280q0-52 38-90t90-38h128v-96q0-66 47-113t113-47h64q66 0 113 47t47 113v96h384v-96q0-66 47-113t113-47h64q66 0 113 47t47 113v96h128q52 0 90 38t38 90z" fill="#4c4c4c"/></svg>
<div class="a" style="left:1121px;top:447px;width:16px;height:20px;background:#f1f1f1;border-top:1px solid #c9c9c9;border-right:1px solid #cfcfcf;border-bottom:1px solid #b7bdd4;"></div>
<svg class="a" style="left:1122.5px;top:451.8px" width="13.1" height="13.2" viewBox="128.0 128.0 1536.0 1536.0" preserveAspectRatio="none"><path d="M1024 544v448q0 14-9 23t-23 9h-320q-14 0-23-9t-9-23v-64q0-14 9-23t23-9h224v-352q0-14 9-23t23-9h64q14 0 23 9t9 23zm416 352q0-148-73-273t-198-198-273-73-273 73-198 198-73 273 73 273 198 198 273 73 273-73 198-198 73-273zm224 0q0 209-103 385.500t-279.500 279.500-385.500 103-385.500-103-279.500-279.500-103-385.500 103-385.500 279.500-279.500 385.500-103 385.500 103 279.500 279.500 103 385.500z" fill="#3c3c3c"/></svg>
<span class="t " style="top:473.19px;font-size:11px;letter-spacing:-0.080px;color:#1a1a1a;font-weight:bold;left:678.03px;">Target Pickup:</span>
<div class="a" style="left:755px;top:473px;width:151px;height:20px;background:#fff;border:1px solid #c9c9c9;"></div>
<span class="t " style="top:474.54px;font-size:12px;letter-spacing:0.080px;color:#333;left:759.3px;">04/10/2022 5:35 PM CDT</span>
<div class="a" style="left:908px;top:473px;width:16px;height:20px;background:#f1f1f1;border-top:1px solid #c9c9c9;border-right:1px solid #cfcfcf;border-bottom:1px solid #b7bdd4;"></div>
<svg class="a" style="left:910px;top:476.9px" width="12.1" height="13" viewBox="64.0 0.0 1664.0 1792.0" preserveAspectRatio="none"><path d="M192 1664h288v-288h-288v288zm352 0h320v-288h-320v288zm-352-352h288v-320h-288v320zm352 0h320v-320h-320v320zm-352-384h288v-288h-288v288zm736 736h320v-288h-320v288zm-384-736h320v-288h-320v288zm768 736h288v-288h-288v288zm-384-352h320v-320h-320v320zm-352-864v-288q0-13-9.500-22.500t-22.500-9.500h-64q-13 0-22.500 9.500t-9.500 22.500v288q0 13 9.500 22.500t22.500 9.500h64q13 0 22.500-9.500t9.500-22.500zm736 864h288v-320h-288v320zm-384-384h320v-288h-320v288zm384 0h288v-288h-288v288zm32-480v-288q0-13-9.500-22.500t-22.500-9.500h-64q-13 0-22.500 9.500t-9.500 22.500v288q0 13 9.500 22.500t22.500 9.500h64q13 0 22.500-9.500t9.500-22.500zm384-64v1280q0 52-38 90t-90 38h-1408q-52 0-90-38t-38-90v-1280q0-52 38-90t90-38h128v-96q0-66 47-113t113-47h64q66 0 113 47t47 113v96h384v-96q0-66 47-113t113-47h64q66 0 113 47t47 113v96h128q52 0 90 38t38 90z" fill="#4c4c4c"/></svg>
<div class="a" style="left:925px;top:473px;width:16px;height:20px;background:#f1f1f1;border-top:1px solid #c9c9c9;border-right:1px solid #cfcfcf;border-bottom:1px solid #b7bdd4;"></div>
<svg class="a" style="left:926.5px;top:477.8px" width="13.1" height="13.2" viewBox="128.0 128.0 1536.0 1536.0" preserveAspectRatio="none"><path d="M1024 544v448q0 14-9 23t-23 9h-320q-14 0-23-9t-9-23v-64q0-14 9-23t23-9h224v-352q0-14 9-23t23-9h64q14 0 23 9t9 23zm416 352q0-148-73-273t-198-198-273-73-273 73-198 198-73 273 73 273 198 198 273 73 273-73 198-198 73-273zm224 0q0 209-103 385.500t-279.500 279.500-385.500 103-385.500-103-279.500-279.500-103-385.500 103-385.500 279.500-279.500 385.500-103 385.500 103 279.500 279.500 103 385.500z" fill="#3c3c3c"/></svg>
<span class="t " style="top:498.19px;font-size:11px;letter-spacing:0.064px;color:#1a1a1a;font-weight:bold;left:705.45px;">Delivery:</span>
<span class="t " style="top:498.80px;font-size:13px;letter-spacing:1.813px;color:#8c0a1c;font-weight:bold;left:695.98px;">*</span>
<div class="a" style="left:755px;top:498px;width:151px;height:20px;background:#fff;border:1px solid #c9c9c9;"></div>
<span class="t " style="top:499.54px;font-size:12px;letter-spacing:0.059px;color:#333;left:759.3px;">03/02/2022 5:55 AM CST</span>
<div class="a" style="left:908px;top:498px;width:16px;height:20px;background:#f1f1f1;border-top:1px solid #c9c9c9;border-right:1px solid #cfcfcf;border-bottom:1px solid #b7bdd4;"></div>
<svg class="a" style="left:910px;top:501.9px" width="12.1" height="13" viewBox="64.0 0.0 1664.0 1792.0" preserveAspectRatio="none"><path d="M192 1664h288v-288h-288v288zm352 0h320v-288h-320v288zm-352-352h288v-320h-288v320zm352 0h320v-320h-320v320zm-352-384h288v-288h-288v288zm736 736h320v-288h-320v288zm-384-736h320v-288h-320v288zm768 736h288v-288h-288v288zm-384-352h320v-320h-320v320zm-352-864v-288q0-13-9.500-22.500t-22.500-9.500h-64q-13 0-22.500 9.500t-9.500 22.500v288q0 13 9.500 22.500t22.500 9.500h64q13 0 22.500-9.500t9.500-22.500zm736 864h288v-320h-288v320zm-384-384h320v-288h-320v288zm384 0h288v-288h-288v288zm32-480v-288q0-13-9.500-22.500t-22.500-9.500h-64q-13 0-22.500 9.500t-9.500 22.500v288q0 13 9.500 22.500t22.500 9.500h64q13 0 22.500-9.500t9.500-22.500zm384-64v1280q0 52-38 90t-90 38h-1408q-52 0-90-38t-38-90v-1280q0-52 38-90t90-38h128v-96q0-66 47-113t113-47h64q66 0 113 47t47 113v96h384v-96q0-66 47-113t113-47h64q66 0 113 47t47 113v96h128q52 0 90 38t38 90z" fill="#4c4c4c"/></svg>
<div class="a" style="left:925px;top:498px;width:16px;height:20px;background:#f1f1f1;border-top:1px solid #c9c9c9;border-right:1px solid #cfcfcf;border-bottom:1px solid #b7bdd4;"></div>
<svg class="a" style="left:926.5px;top:502.8px" width="13.1" height="13.2" viewBox="128.0 128.0 1536.0 1536.0" preserveAspectRatio="none"><path d="M1024 544v448q0 14-9 23t-23 9h-320q-14 0-23-9t-9-23v-64q0-14 9-23t23-9h224v-352q0-14 9-23t23-9h64q14 0 23 9t9 23zm416 352q0-148-73-273t-198-198-273-73-273 73-198 198-73 273 73 273 198 198 273 73 273-73 198-198 73-273zm224 0q0 209-103 385.500t-279.500 279.500-385.500 103-385.500-103-279.500-279.500-103-385.500 103-385.500 279.500-279.500 385.500-103 385.500 103 279.500 279.500 103 385.500z" fill="#3c3c3c"/></svg>
<span class="t " style="top:498.04px;font-size:10px;letter-spacing:-0.203px;color:#333;left:945px;">-</span>
<div class="a" style="left:951px;top:498px;width:151px;height:20px;background:#fff;border:1px solid #c9c9c9;"></div>
<span class="t " style="top:499.54px;font-size:12px;letter-spacing:0.059px;color:#333;left:955.3px;">03/02/2022 5:55 AM CST</span>
<div class="a" style="left:1104px;top:498px;width:16px;height:20px;background:#f1f1f1;border-top:1px solid #c9c9c9;border-right:1px solid #cfcfcf;border-bottom:1px solid #b7bdd4;"></div>
<svg class="a" style="left:1106px;top:501.9px" width="12.1" height="13" viewBox="64.0 0.0 1664.0 1792.0" preserveAspectRatio="none"><path d="M192 1664h288v-288h-288v288zm352 0h320v-288h-320v288zm-352-352h288v-320h-288v320zm352 0h320v-320h-320v320zm-352-384h288v-288h-288v288zm736 736h320v-288h-320v288zm-384-736h320v-288h-320v288zm768 736h288v-288h-288v288zm-384-352h320v-320h-320v320zm-352-864v-288q0-13-9.500-22.500t-22.500-9.500h-64q-13 0-22.500 9.500t-9.500 22.500v288q0 13 9.500 22.500t22.500 9.500h64q13 0 22.500-9.500t9.500-22.500zm736 864h288v-320h-288v320zm-384-384h320v-288h-320v288zm384 0h288v-288h-288v288zm32-480v-288q0-13-9.500-22.500t-22.500-9.500h-64q-13 0-22.500 9.500t-9.500 22.500v288q0 13 9.500 22.500t22.500 9.500h64q13 0 22.500-9.500t9.500-22.500zm384-64v1280q0 52-38 90t-90 38h-1408q-52 0-90-38t-38-90v-1280q0-52 38-90t90-38h128v-96q0-66 47-113t113-47h64q66 0 113 47t47 113v96h384v-96q0-66 47-113t113-47h64q66 0 113 47t47 113v96h128q52 0 90 38t38 90z" fill="#4c4c4c"/></svg>
<div class="a" style="left:1121px;top:498px;width:16px;height:20px;background:#f1f1f1;border-top:1px solid #c9c9c9;border-right:1px solid #cfcfcf;border-bottom:1px solid #b7bdd4;"></div>
<svg class="a" style="left:1122.5px;top:502.8px" width="13.1" height="13.2" viewBox="128.0 128.0 1536.0 1536.0" preserveAspectRatio="none"><path d="M1024 544v448q0 14-9 23t-23 9h-320q-14 0-23-9t-9-23v-64q0-14 9-23t23-9h224v-352q0-14 9-23t23-9h64q14 0 23 9t9 23zm416 352q0-148-73-273t-198-198-273-73-273 73-198 198-73 273 73 273 198 198 273 73 273-73 198-198 73-273zm224 0q0 209-103 385.500t-279.500 279.500-385.500 103-385.500-103-279.500-279.500-103-385.500 103-385.500 279.500-279.500 385.500-103 385.500 103 279.500 279.500 103 385.500z" fill="#3c3c3c"/></svg>
<span class="t " style="top:524.19px;font-size:11px;letter-spacing:0.020px;color:#1a1a1a;font-weight:bold;left:669.85px;">Target Delivery:</span>
<div class="a" style="left:755px;top:524px;width:151px;height:20px;background:#fff;border:1px solid #c9c9c9;"></div>
<span class="t " style="top:525.54px;font-size:12px;letter-spacing:0.080px;color:#333;left:759.3px;">04/15/2022 6:35 PM CDT</span>
<div class="a" style="left:908px;top:524px;width:16px;height:20px;background:#f1f1f1;border-top:1px solid #c9c9c9;border-right:1px solid #cfcfcf;border-bottom:1px solid #b7bdd4;"></div>
<svg class="a" style="left:910px;top:527.9px" width="12.1" height="13" viewBox="64.0 0.0 1664.0 1792.0" preserveAspectRatio="none"><path d="M192 1664h288v-288h-288v288zm352 0h320v-288h-320v288zm-352-352h288v-320h-288v320zm352 0h320v-320h-320v320zm-352-384h288v-288h-288v288zm736 736h320v-288h-320v288zm-384-736h320v-288h-320v288zm768 736h288v-288h-288v288zm-384-352h320v-320h-320v320zm-352-864v-288q0-13-9.500-22.500t-22.500-9.500h-64q-13 0-22.500 9.500t-9.500 22.500v288q0 13 9.500 22.500t22.500 9.500h64q13 0 22.500-9.500t9.500-22.500zm736 864h288v-320h-288v320zm-384-384h320v-288h-320v288zm384 0h288v-288h-288v288zm32-480v-288q0-13-9.500-22.500t-22.500-9.500h-64q-13 0-22.500 9.500t-9.500 22.500v288q0 13 9.500 22.500t22.500 9.500h64q13 0 22.500-9.500t9.500-22.500zm384-64v1280q0 52-38 90t-90 38h-1408q-52 0-90-38t-38-90v-1280q0-52 38-90t90-38h128v-96q0-66 47-113t113-47h64q66 0 113 47t47 113v96h384v-96q0-66 47-113t113-47h64q66 0 113 47t47 113v96h128q52 0 90 38t38 90z" fill="#4c4c4c"/></svg>
<div class="a" style="left:925px;top:524px;width:16px;height:20px;background:#f1f1f1;border-top:1px solid #c9c9c9;border-right:1px solid #cfcfcf;border-bottom:1px solid #b7bdd4;"></div>
<svg class="a" style="left:926.5px;top:528.8px" width="13.1" height="13.2" viewBox="128.0 128.0 1536.0 1536.0" preserveAspectRatio="none"><path d="M1024 544v448q0 14-9 23t-23 9h-320q-14 0-23-9t-9-23v-64q0-14 9-23t23-9h224v-352q0-14 9-23t23-9h64q14 0 23 9t9 23zm416 352q0-148-73-273t-198-198-273-73-273 73-198 198-73 273 73 273 198 198 273 73 273-73 198-198 73-273zm224 0q0 209-103 385.500t-279.500 279.500-385.500 103-385.500-103-279.500-279.500-103-385.500 103-385.500 279.500-279.500 385.500-103 385.500 103 279.500 279.500 103 385.500z" fill="#3c3c3c"/></svg>
<span class="t " style="top:549.19px;font-size:11px;letter-spacing:-0.150px;color:#1a1a1a;font-weight:bold;left:680.60px;">Service Level:</span>
<div class="a" style="left:755px;top:549px;width:163px;height:19px;background:#fff;border:1px solid #c9c9c9;"></div>
<svg class="a" style="left:922.6px;top:550.9px" width="16.1" height="16.2" viewBox="64.0 128.0 1664.0 1664.0" preserveAspectRatio="none"><path d="M1088 800v64q0 13-9.500 22.500t-22.500 9.500h-224v224q0 13-9.500 22.500t-22.500 9.500h-64q-13 0-22.500-9.500t-9.500-22.500v-224h-224q-13 0-22.500-9.500t-9.500-22.500v-64q0-13 9.500-22.500t22.500-9.500h224v-224q0-13 9.500-22.500t22.500-9.500h64q13 0 22.500 9.500t9.500 22.500v224h224q13 0 22.500 9.500t9.500 22.500zm128 32q0-185-131.500-316.500t-316.500-131.500-316.500 131.500-131.500 316.500 131.500 316.500 316.500 131.500 316.500-131.500 131.500-316.500zm512 832q0 53-37.500 90.500t-90.500 37.500q-54 0-90-38l-343-342q-179 124-399 124-143 0-273.500-55.500t-225-150-150-225-55.500-273.500 55.500-273.500 150-225 225-150 273.500-55.500 273.500 55.500 225 150 150 225 55.500 273.500q0 220-124 399l343 343q37 37 37 90z" fill="#15303d"/></svg>
<svg class="a" style="left:1140px;top:497px;" width="22" height="22" viewBox="1140 497 22 22"><g transform="rotate(-29 1150.8 508)"><rect x="1145.2" y="502.4" width="11.2" height="11.2" fill="#fff" stroke="#0a0a0a" stroke-width="1.2"/><path d="M1144.6 502.6 H1157" stroke="#0a0a0a" stroke-width="2"/><path d="M1147.6 505 V512.6 M1149.8 505 V512.6 M1152 505 V512.6 M1154.2 505 V512.6" stroke="#c8c8c8" stroke-width=".8" stroke-dasharray="1 1"/></g><circle cx="1153" cy="505.9" r="1.6" fill="#fff" stroke="#b0080f" stroke-width="1"/></svg>
<span class="t " style="top:668.99px;font-size:11px;letter-spacing:-0.048px;color:#1a1a1a;font-weight:bold;left:212.94px;">Ship With Group:</span>
<div class="a" style="left:305px;top:669px;width:168px;height:20px;background:#fff;border:1px solid #c9c9c9;"></div>
<span class="t " style="top:693.69px;font-size:11px;letter-spacing:0.124px;color:#1a1a1a;font-weight:bold;left:209.44px;">Parent Shipment:</span>
<div class="a" style="left:305px;top:694px;width:168px;height:19px;background:#fff;border:1px solid #c9c9c9;"></div>
<span class="t " style="top:717.99px;font-size:11px;letter-spacing:0.272px;color:#1a1a1a;font-weight:bold;left:241.99px;">Movement:</span>
<span class="t " style="top:717.99px;font-size:11px;letter-spacing:0.132px;color:#333;left:305px;">M-468011</span>
<span class="t " style="top:668.99px;font-size:11px;letter-spacing:-0.074px;color:#1a1a1a;font-weight:bold;left:682.03px;">BOL No/MBL:</span>
<div class="a" style="left:755px;top:669px;width:168px;height:20px;background:#fff;border:1px solid #c9c9c9;"></div>
<span class="t " style="top:693.69px;font-size:11px;letter-spacing:-0.157px;color:#1a1a1a;font-weight:bold;left:658.75px;">Receiving Slip No:</span>
<div class="a" style="left:755px;top:694px;width:168px;height:19px;background:#fff;border:1px solid #c9c9c9;"></div>
<span class="t " style="top:718.69px;font-size:11px;letter-spacing:-0.161px;color:#1a1a1a;font-weight:bold;left:683.39px;">PRO No/HBL:</span>
<div class="a" style="left:755px;top:719px;width:168px;height:20px;background:#fff;border:1px solid #c9c9c9;"></div>
<div class="a" style="left:120px;top:737px;width:1484px;height:48px;background:#fff;border-radius:0 0 5px 5px;border-top:1px solid #dedede;height:47px;"></div>
<div class="a" style="left:126px;top:750px;width:33px;height:26px;background:#2e4e69;border:1px solid #1a93b3;border-radius:2px;"></div>
<svg class="a" style="left:126px;top:750px;" width="35" height="28" viewBox="126 750 35 28"><ellipse cx="143.4" cy="764.9" rx="5.8" ry="4.8" fill="#fff"/><path d="M144.4 768 L147.4 771 L146.6 766.6Z" fill="#fff"/><ellipse cx="139.2" cy="761.4" rx="8.2" ry="6.6" fill="#2e4e69"/><ellipse cx="139.2" cy="761.4" rx="7.3" ry="5.7" fill="#fff"/><path d="M134.8 765 C134.8 766.8 134.4 768.2 133.4 769.3 C136 769 137.6 768 138.6 766.4Z" fill="#fff"/><path d="M149.1 762.2 L155.8 765.9 L149.1 769.6Z" fill="#fff"/></svg>
<div class="a" style="left:1306px;top:750px;width:26px;height:26px;background:#2e4e69;border:1px solid #1a93b3;border-radius:2px;"></div>
<svg class="a" style="left:1315px;top:757.5px;" width="12" height="13" viewBox="0 0 12 13"><path d="M3.4 .3 H8.6 L11.7 3.4 V10.2 H3.4Z" fill="#fff"/><path d="M8.2 .9 V3.9 H11.2" fill="none" stroke="#7d93a6" stroke-width=".9"/><rect x="0" y="3.2" width="7.8" height="9.8" rx=".8" fill="#2e4e69"/><rect x=".5" y="3.9" width="6.4" height="8.7" rx=".5" fill="#fff"/></svg>
<div class="a" style="left:1349px;top:750px;width:70px;height:26px;background:#2e4e69;border:1px solid #1a93b3;border-radius:2px;"></div>
<span class="t " style="top:754.54px;font-size:12px;letter-spacing:0.223px;color:#fff;left:1356px;">Actions</span>
<svg class="a" style="left:1404.7px;top:763px" width="7.8" height="4.6" viewBox="384.0 640.0 1024.0 576.0" preserveAspectRatio="none"><path d="M1408 704q0 26-19 45l-448 448q-19 19-45 19t-45-19l-448-448q-19-19-19-45t19-45 45-19h896q26 0 45 19t19 45z" fill="#fff"/></svg>
<div class="a" style="left:1436px;top:750px;width:66px;height:26px;background:#2e4e69;border:1px solid #1a93b3;border-radius:2px;"></div>
<span class="t " style="top:754.54px;font-size:12px;letter-spacing:-0.331px;color:#fff;left:1456.99px;">Save</span>
<div class="a" style="left:1519px;top:750px;width:66px;height:26px;background:#2e4e69;border:1px solid #1a93b3;border-radius:2px;"></div>
<span class="t " style="top:754.54px;font-size:12px;letter-spacing:0.407px;color:#fff;left:1539.85px;">Next</span>
</body></html>
